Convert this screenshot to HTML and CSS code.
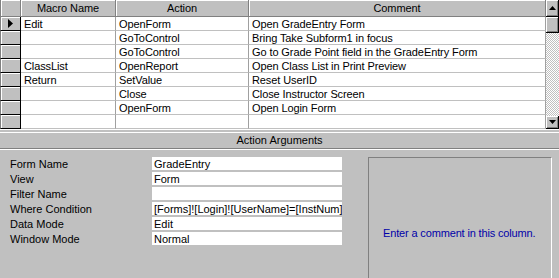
FILE: index.html
```html
<!DOCTYPE html>
<html>

	<head>
		<meta charset="UTF-8">
		<title>Macro</title>
		<link rel="stylesheet" href="styles.css">
	</head>

	<body>
		<div class="sheet">
			<div class="macros">
				<div class="row head">
					<div class="sel"></div>
					<div class="cell">Macro Name</div>
					<div class="cell">Action</div>
					<div class="cell">Comment</div>
				</div>
				<div class="row">
					<div class="sel cur"><svg width="7" height="9" viewBox="0 0 7 9"><path d="M1 0 L6 4.5 L1 9 Z" fill="#000"/></svg></div>
					<div class="cell">Edit</div>
					<div class="cell">OpenForm</div>
					<div class="cell">Open GradeEntry Form</div>
				</div>
				<div class="row">
					<div class="sel"></div>
					<div class="cell"></div>
					<div class="cell">GoToControl</div>
					<div class="cell">Bring Take Subform1 in focus</div>
				</div>
				<div class="row">
					<div class="sel"></div>
					<div class="cell"></div>
					<div class="cell">GoToControl</div>
					<div class="cell">Go to Grade Point field in the GradeEntry Form</div>
				</div>
				<div class="row">
					<div class="sel"></div>
					<div class="cell">ClassList</div>
					<div class="cell">OpenReport</div>
					<div class="cell">Open Class List in Print Preview</div>
				</div>
				<div class="row">
					<div class="sel"></div>
					<div class="cell">Return</div>
					<div class="cell">SetValue</div>
					<div class="cell">Reset UserID</div>
				</div>
				<div class="row">
					<div class="sel"></div>
					<div class="cell"></div>
					<div class="cell">Close</div>
					<div class="cell">Close Instructor Screen</div>
				</div>
				<div class="row">
					<div class="sel"></div>
					<div class="cell"></div>
					<div class="cell">OpenForm</div>
					<div class="cell">Open Login Form</div>
				</div>
				<div class="row">
					<div class="sel"></div>
					<div class="cell"></div>
					<div class="cell"></div>
					<div class="cell"></div>
				</div>
			</div>
			<div class="vscroll">
				<div class="sbtn up"><svg width="7" height="4" viewBox="0 0 7 4"><path d="M3.5 0 L7 4 L0 4 Z" fill="#000"/></svg></div>
				<div class="sbtn thumb"></div>
				<div class="track"></div>
				<div class="sbtn down"><svg width="7" height="4" viewBox="0 0 7 4"><path d="M0 0 L7 0 L3.5 4 Z" fill="#000"/></svg></div>
			</div>
		</div>

		<div class="args-head">Action Arguments</div>

		<div class="args">
			<div class="fields">
				<div class="lbl">Form Name</div>
				<div class="val">GradeEntry</div>
				<div class="lbl">View</div>
				<div class="val">Form</div>
				<div class="lbl">Filter Name</div>
				<div class="val"></div>
				<div class="lbl">Where Condition</div>
				<div class="val">[Forms]![Login]![UserName]=[InstNum]</div>
				<div class="lbl">Data Mode</div>
				<div class="val">Edit</div>
				<div class="lbl">Window Mode</div>
				<div class="val">Normal</div>
			</div>
			<div class="hint">Enter a comment in this column.</div>
		</div>
	</body>

</html>
```

FILE: styles.css
```css
html,
body {
	margin: 0;
	height: 100%;
	overflow: hidden;
}

body {
	background-color: #c0c0c0;
	font-family: "Liberation Sans", Arial, sans-serif;
	font-size: 11px;
	color: #000;
}

.sheet {
	display: flex;
	height: 129px;
	border-bottom: 1px solid #fff;
}

.macros {
	width: 546px;
}

.row {
	display: grid;
	grid-template-columns: 21px 95px 133px 297px;
	height: 14px;
}

.row.head {
	height: 17px;
}

.sel {
	box-sizing: border-box;
	background-color: #c0c0c0;
	border-right: 1px solid #000;
	border-bottom: 1px solid #000;
	border-left: 1px solid #808080;
	box-shadow: inset 1px 1px #fff;
	display: flex;
	align-items: center;
	justify-content: center;
}

.head .sel {
	border-color: #808080;
}

.cell {
	box-sizing: border-box;
	background-color: #fff;
	border-right: 1px solid #a0a0a0;
	border-bottom: 1px solid #c0c0c0;
	padding-left: 3px;
	line-height: 15px;
	white-space: nowrap;
	overflow: hidden;
	letter-spacing: -0.1px;
}

.head .cell {
	background-color: #c0c0c0;
	border-right: 1px solid #808080;
	border-bottom: 1px solid #808080;
	box-shadow: inset 1px 1px #fff;
	text-align: center;
	line-height: 17px;
	padding-left: 0;
}

.vscroll {
	width: 13px;
	display: flex;
	flex-direction: column;
}

.sbtn {
	box-sizing: border-box;
	background-color: #c0c0c0;
	border-right: 1px solid #000;
	border-bottom: 1px solid #000;
	box-shadow: inset 1px 1px #fff, inset -1px -1px #808080;
	display: flex;
	align-items: center;
	justify-content: center;
}

.up {
	height: 17px;
}

.thumb {
	height: 16px;
}

.down {
	height: 13px;
}

.track {
	flex: 1;
	background-color: #fff;
	background-image: repeating-conic-gradient(#c0c0c0 0 25%, #fff 0 50%);
	background-size: 2px 2px;
}

.args-head {
	margin-top: 2px;
	height: 15px;
	line-height: 15px;
	text-align: center;
	border-top: 1px solid #fff;
	border-bottom: 1px solid #808080;
	box-shadow: 0 1px #fff;
}

.args {
	display: flex;
	padding-top: 8px;
}

.fields {
	display: grid;
	grid-template-columns: 142px 190px;
	grid-auto-rows: 13px;
	row-gap: 2px;
	padding-left: 10px;
}

.lbl {
	line-height: 14px;
	white-space: nowrap;
}

.val {
	background-color: #fff;
	line-height: 14px;
	padding-left: 2px;
	white-space: nowrap;
	overflow: hidden;
}

.hint {
	margin-left: 26px;
	width: 184px;
	height: 140px;
	box-sizing: border-box;
	border-left: 1px solid #808080;
	border-top: 1px solid #808080;
	border-right: 1px solid #fff;
	padding: 69px 0 0 14px;
	color: #0000a8;
	white-space: nowrap;
	letter-spacing: -0.15px;
}
```
